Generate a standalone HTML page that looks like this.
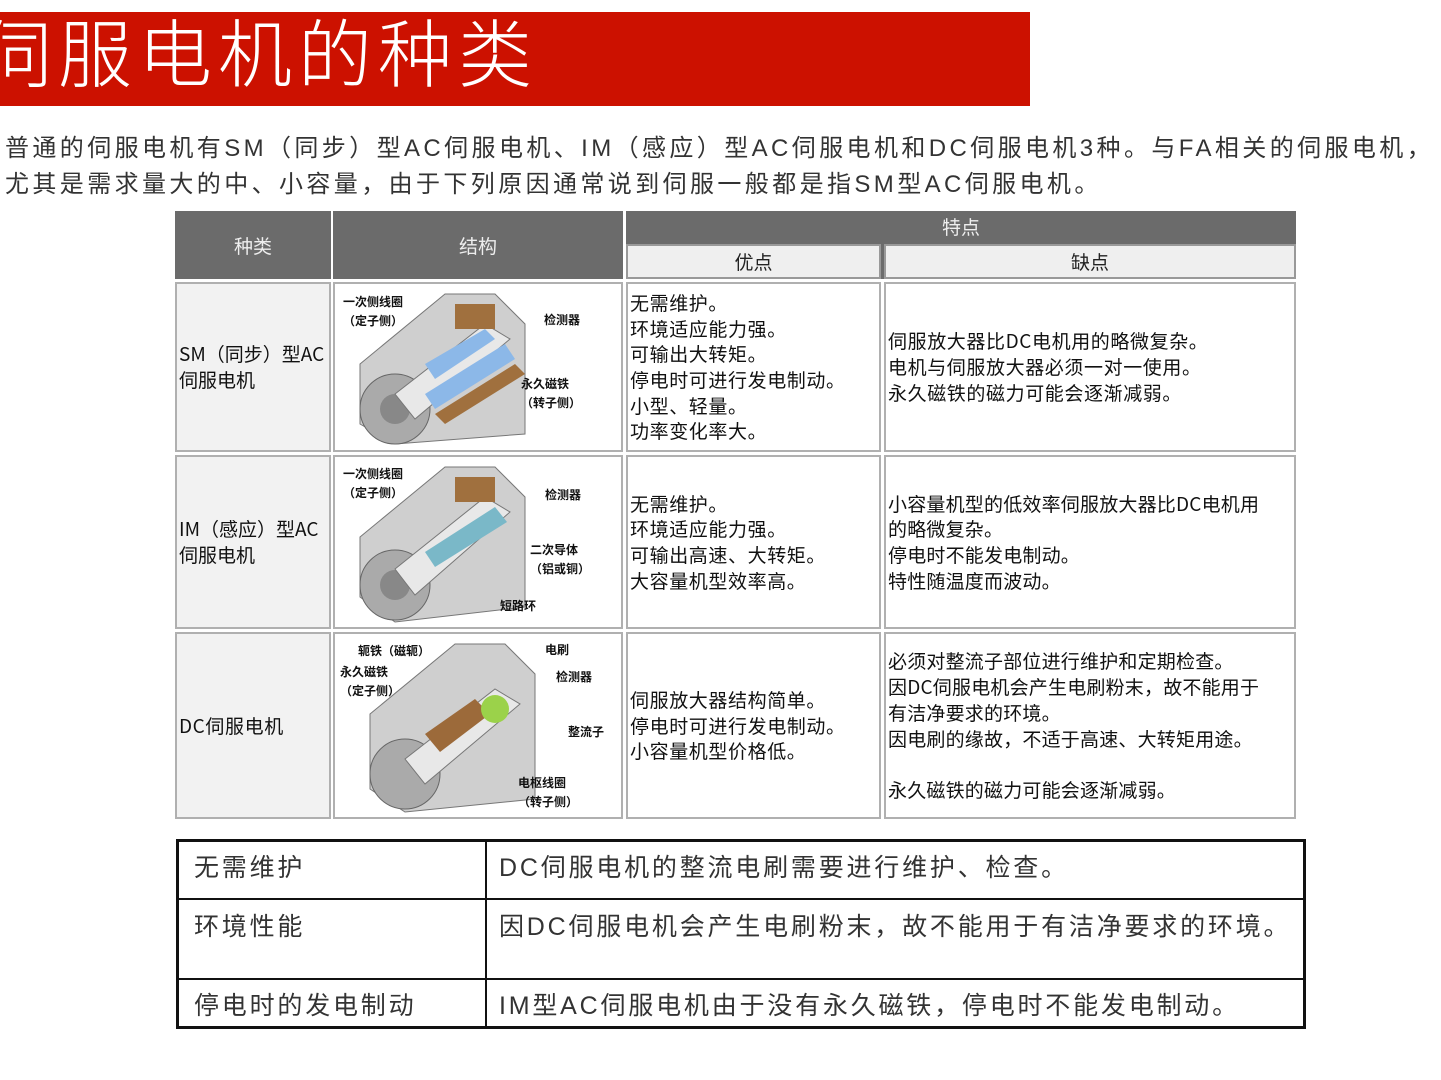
<!DOCTYPE html>
<html><head><meta charset="utf-8"><style>
body{margin:0;width:1441px;height:1080px;background:#fff;position:relative;overflow:hidden;font-family:"Liberation Sans","Noto Sans CJK SC",sans-serif;}
.banner{position:absolute;left:0;top:12px;width:1030px;height:94px;background:#cc1100;}
.title{position:absolute;left:-22px;top:4px;font-size:74px;line-height:80px;color:#fff;font-weight:300;letter-spacing:6px;white-space:nowrap;}
.p{position:absolute;left:5px;font-size:24px;color:#333;white-space:nowrap;letter-spacing:3.4px}
.c{position:absolute;box-sizing:border-box;border:2px solid #b0b0b0;background:#fff;font-family:"Noto Sans CJK SC",sans-serif;font-size:19px;line-height:25.7px;color:#111;overflow:hidden;letter-spacing:0.6px;white-space:nowrap}
.h{position:absolute;box-sizing:border-box;background:#6b6b6b;color:#eee;font-size:19px;display:flex;align-items:center;justify-content:center;font-family:"Noto Sans CJK SC",sans-serif;}
.sh{position:absolute;box-sizing:border-box;background:#efefef;border:2px solid #999;color:#222;font-size:19px;display:flex;align-items:center;justify-content:center;font-family:"Noto Sans CJK SC",sans-serif;}
.t{padding:0 0 0 2px;display:flex;flex-direction:column;justify-content:center;}
.lbl{position:absolute;font-size:12px;font-weight:bold;line-height:19px;color:#111;font-family:"Noto Sans CJK SC",sans-serif;}
.bt{position:absolute;left:176px;top:839px;width:1130px;height:190px;box-sizing:border-box;border:3px solid #111;}
.bl{position:absolute;height:2px;background:#111;left:0;right:0}
.bv{position:absolute;width:2px;background:#111;top:0;bottom:0;left:306px}
.bx{position:absolute;font-size:25px;color:#333;white-space:nowrap;letter-spacing:2.8px}
</style></head><body>
<div class="banner"><div class="title">伺服电机的种类</div></div>
<div class="p" style="top:128px">普通的伺服电机有SM（同步）型AC伺服电机、IM（感应）型AC伺服电机和DC伺服电机3种。与FA相关的伺服电机，</div>
<div class="p" style="top:164px">尤其是需求量大的中、小容量，由于下列原因通常说到伺服一般都是指SM型AC伺服电机。</div>

<div class="h" style="left:175px;top:211px;width:156px;height:68px">种类</div>
<div class="h" style="left:333px;top:211px;width:290px;height:68px">结构</div>
<div class="h" style="left:626px;top:211px;width:670px;height:68px;align-items:flex-start;padding-top:2px">特点</div>
<div class="sh" style="left:626px;top:244px;width:255px;height:35px">优点</div>
<div class="sh" style="left:884px;top:244px;width:412px;height:35px">缺点</div>

<div class="c t" style="left:175px;top:282px;width:156px;height:170px;background:#f2f2f2;letter-spacing:0">SM（同步）型AC<br>伺服电机</div>
<div class="c" style="left:333px;top:282px;width:290px;height:170px"></div>
<div class="c t" style="left:626px;top:282px;width:255px;height:170px">无需维护。<br>环境适应能力强。<br>可输出大转矩。<br>停电时可进行发电制动。<br>小型、轻量。<br>功率变化率大。</div>
<div class="c t" style="left:884px;top:282px;width:412px;height:170px">伺服放大器比DC电机用的略微复杂。<br>电机与伺服放大器必须一对一使用。<br>永久磁铁的磁力可能会逐渐减弱。</div>

<div class="c t" style="left:175px;top:455px;width:156px;height:174px;background:#f2f2f2;letter-spacing:0">IM（感应）型AC<br>伺服电机</div>
<div class="c" style="left:333px;top:455px;width:290px;height:174px"></div>
<div class="c t" style="left:626px;top:455px;width:255px;height:174px">无需维护。<br>环境适应能力强。<br>可输出高速、大转矩。<br>大容量机型效率高。</div>
<div class="c t" style="left:884px;top:455px;width:412px;height:174px;letter-spacing:0.2px">小容量机型的低效率伺服放大器比DC电机用<br>的略微复杂。<br>停电时不能发电制动。<br>特性随温度而波动。</div>

<div class="c t" style="left:175px;top:632px;width:156px;height:187px;background:#f2f2f2">DC伺服电机</div>
<div class="c" style="left:333px;top:632px;width:290px;height:187px"></div>
<div class="c t" style="left:626px;top:632px;width:255px;height:187px">伺服放大器结构简单。<br>停电时可进行发电制动。<br>小容量机型价格低。</div>
<div class="c t" style="left:884px;top:632px;width:412px;height:187px;letter-spacing:0.2px">必须对整流子部位进行维护和定期检查。<br>因DC伺服电机会产生电刷粉末，故不能用于<br>有洁净要求的环境。<br>因电刷的缘故，不适于高速、大转矩用途。<br><br>永久磁铁的磁力可能会逐渐减弱。</div>

<svg style="position:absolute;left:335px;top:284px" width="286" height="166">
<polygon points="25,80 110,10 160,10 190,40 190,150 60,160 25,140" fill="#cfcfcf" stroke="#777"/>
<circle cx="60" cy="125" r="35" fill="#aaa" stroke="#666"/><circle cx="60" cy="125" r="15" fill="#888"/>
<polygon points="60,110 150,40 175,55 80,135" fill="#e8e8e8" stroke="#777"/>
<polygon points="90,80 150,45 160,55 100,95" fill="#8cb8e8"/><polygon points="90,110 170,60 180,75 100,125" fill="#8cb8e8"/>
<rect x="120" y="20" width="40" height="25" fill="#a0703e"/><polygon points="100,130 180,80 190,90 110,140" fill="#a0703e"/>
</svg>
<svg style="position:absolute;left:335px;top:457px" width="286" height="170">
<polygon points="25,80 110,10 160,10 190,40 190,150 60,165 25,140" fill="#cfcfcf" stroke="#777"/>
<circle cx="60" cy="128" r="35" fill="#aaa" stroke="#666"/><circle cx="60" cy="128" r="15" fill="#888"/>
<polygon points="60,112 150,40 175,55 80,138" fill="#e8e8e8" stroke="#777"/>
<polygon points="90,95 160,50 172,65 100,110" fill="#7ab8c8"/><rect x="120" y="20" width="40" height="25" fill="#a0703e"/>
</svg>
<svg style="position:absolute;left:335px;top:634px" width="286" height="183">
<polygon points="35,80 120,10 170,10 200,40 200,165 70,178 35,155" fill="#cfcfcf" stroke="#777"/>
<circle cx="70" cy="140" r="35" fill="#aaa" stroke="#666"/>
<polygon points="70,125 160,55 185,70 90,150" fill="#e8e8e8" stroke="#777"/>
<polygon points="90,100 140,65 155,80 105,118" fill="#9c6a3a"/><circle cx="160" cy="75" r="14" fill="#9bd24a"/>
</svg>
<div class="lbl" style="left:343px;top:292px">一次侧线圈<br>（定子侧）</div>
<div class="lbl" style="left:544px;top:310px">检测器</div>
<div class="lbl" style="left:521px;top:374px">永久磁铁<br>（转子侧）</div>
<div class="lbl" style="left:343px;top:464px">一次侧线圈<br>（定子侧）</div>
<div class="lbl" style="left:545px;top:485px">检测器</div>
<div class="lbl" style="left:530px;top:540px">二次导体<br>（铝或铜）</div>
<div class="lbl" style="left:500px;top:596px">短路环</div>
<div class="lbl" style="left:358px;top:641px">轭铁（磁轭）</div>
<div class="lbl" style="left:340px;top:662px">永久磁铁<br>（定子侧）</div>
<div class="lbl" style="left:545px;top:640px">电刷</div>
<div class="lbl" style="left:556px;top:667px">检测器</div>
<div class="lbl" style="left:568px;top:722px">整流子</div>
<div class="lbl" style="left:518px;top:773px">电枢线圈<br>（转子侧）</div>

<div class="bt">
<div class="bl" style="top:56px"></div><div class="bl" style="top:136px"></div><div class="bv"></div>
<div class="bx" style="left:15px;top:6px">无需维护</div>
<div class="bx" style="left:15px;top:65px">环境性能</div>
<div class="bx" style="left:15px;top:144px">停电时的发电制动</div>
<div class="bx" style="left:320px;top:6px">DC伺服电机的整流电刷需要进行维护、检查。</div>
<div class="bx" style="left:320px;top:65px">因DC伺服电机会产生电刷粉末，故不能用于有洁净要求的环境。</div>
<div class="bx" style="left:320px;top:144px">IM型AC伺服电机由于没有永久磁铁，停电时不能发电制动。</div>
</div>
</body></html>
